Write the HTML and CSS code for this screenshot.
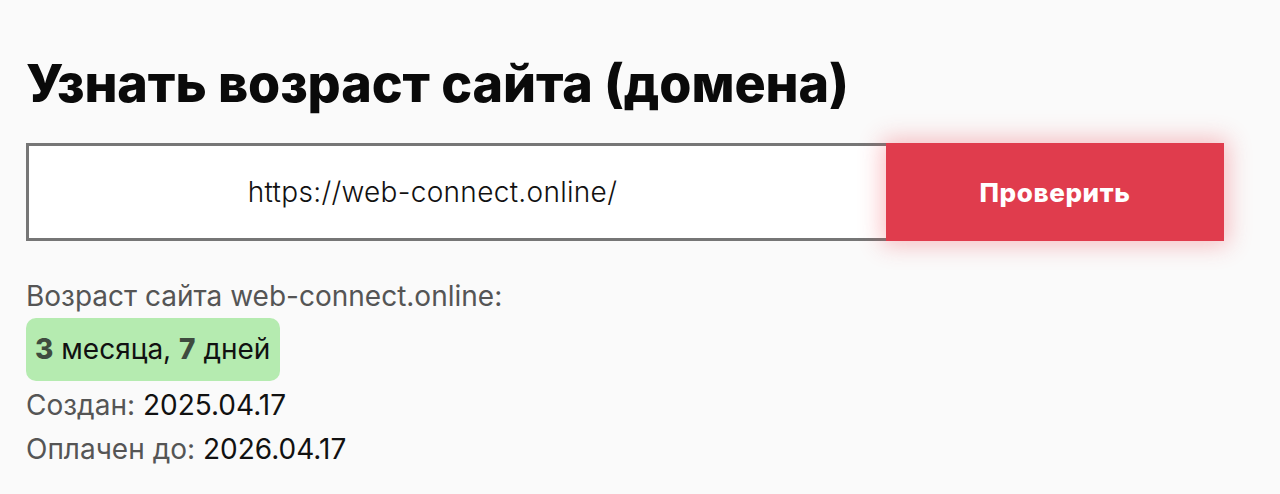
FILE: index.html
```html
<!DOCTYPE html>
<html lang="ru">
<head>
<meta charset="utf-8">
<title>Узнать возраст сайта</title>
<link rel="stylesheet" href="styles.css">
</head>
<body>
<main class="page">
  <h1 class="title">Узнать возраст сайта (домена)</h1>
  <form class="check">
    <div class="field">https://web-connect.online/</div>
    <button type="button" class="btn">Проверить</button>
  </form>
  <div class="result">
    <div class="line muted">Возраст сайта web-connect.online:</div>
    <div class="badge"><b>3</b> месяца, <b>7</b> дней</div>
    <div class="line"><span class="muted">Создан:</span> 2025.04.17</div>
    <div class="line"><span class="muted">Оплачен до:</span> 2026.04.17</div>
  </div>
</main>
</body>
</html>
```
FILE: styles.css
```css
html, body {
  margin: 0;
  padding: 0;
  background: #fafafa;
}
body {
  font-family: "Inter", "DejaVu Sans", sans-serif;
  color: #111;
}
.page {
  padding: 52px 26px 0 26px;
}
.title {
  margin: 0;
  font-size: 52px;
  font-weight: 800;
  line-height: 64px;
  color: #0a0a0a;
  letter-spacing: -0.1px;
}
.check {
  display: flex;
  margin-top: 27px;
  width: 1198px;
  height: 98px;
}
.field {
  box-sizing: border-box;
  width: 860px;
  height: 98px;
  border: 3px solid #767676;
  border-right: none;
  background: #fff;
  display: flex;
  align-items: center;
  justify-content: center;
  padding-right: 50px;
  font-size: 28px;
  font-weight: 300;
  letter-spacing: 0.3px;
  color: #111;
}
.btn {
  flex: 1;
  border: none;
  background: #e03c4d;
  color: #fff;
  font-family: "Inter", sans-serif;
  font-size: 26px;
  font-weight: 800;
  letter-spacing: 0.6px;
  padding: 0;
  box-shadow: 0 0 22px 4px rgba(240, 60, 70, 0.32);
}
.result {
  margin-top: 33px;
  display: flex;
  flex-direction: column;
  align-items: flex-start;
}
.line {
  font-size: 28px;
  line-height: 44px;
  color: #111;
}
.muted {
  color: #555;
}
.badge {
  background: #b5ebb0;
  border-radius: 10px;
  padding: 10px 10px 10px 9px;
  margin-bottom: 2px;
  font-size: 28px;
  line-height: 43px;
  color: #111;
}
.badge b {
  color: #3f4b3f;
  font-weight: 800;
}
```
